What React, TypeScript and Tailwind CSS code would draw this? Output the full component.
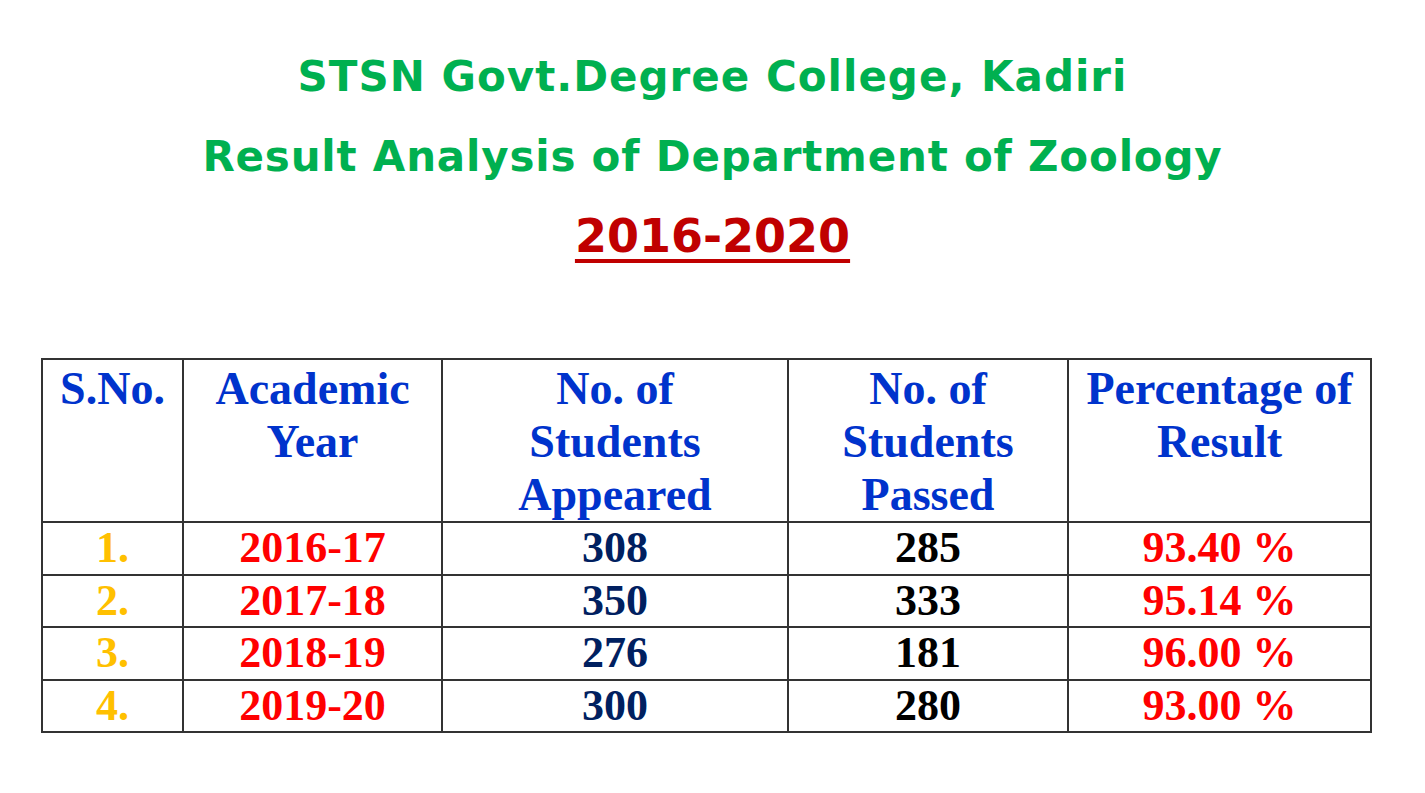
import React from 'react';

const rows = [
  { sno: '1.', year: '2016-17', appeared: '308', passed: '285', pct: '93.40 %' },
  { sno: '2.', year: '2017-18', appeared: '350', passed: '333', pct: '95.14 %' },
  { sno: '3.', year: '2018-19', appeared: '276', passed: '181', pct: '96.00 %' },
  { sno: '4.', year: '2019-20', appeared: '300', passed: '280', pct: '93.00 %' },
];

const App: React.FC = () => {
  return (
    <div className="w-[1425px] h-[793px] bg-white overflow-hidden">
      {/* Title block */}
      <div className="flex flex-col items-center pt-[37px] font-['DejaVu_Sans',sans-serif] font-bold">
        <h1 className="text-[#00b050] text-[42px] leading-[80px] tracking-[1px]">
          STSN Govt.Degree College, Kadiri
        </h1>
        <h2 className="text-[#00b050] text-[42px] leading-[80px] tracking-[0.8px]">
          Result Analysis of Department of Zoology
        </h2>
        <p className="text-[#c00000] text-[46px] leading-[78px] underline decoration-[4px] underline-offset-[7px]">
          2016-2020
        </p>
      </div>

      {/* Table */}
      <div className="pl-[41px] pt-[83px]">
        <table className="border-collapse font-['Liberation_Serif',serif] font-bold">
          <thead>
            <tr className="text-[#0033cc] text-[46px] leading-[53px] align-top">
              <th className="w-[141px] h-[162px] border-2 border-[#333] pt-[2px] font-bold">S.No.</th>
              <th className="w-[259px] border-2 border-[#333] pt-[2px] font-bold">
                Academic<br />Year
              </th>
              <th className="w-[346px] border-2 border-[#333] pt-[2px] font-bold">
                No. of<br />Students<br />Appeared
              </th>
              <th className="w-[280px] border-2 border-[#333] pt-[2px] font-bold">
                No. of<br />Students<br />Passed
              </th>
              <th className="w-[303px] border-2 border-[#333] pt-[2px] font-bold">
                Percentage of<br />Result
              </th>
            </tr>
          </thead>
          <tbody>
            {rows.map((r) => (
              <tr key={r.sno} className="h-[52.5px] text-[44px] leading-[50px] text-center">
                <td className="border-2 border-[#333] text-[#ffc000]">{r.sno}</td>
                <td className="border-2 border-[#333] text-[#ff0000]">{r.year}</td>
                <td className="border-2 border-[#333] text-[#002060]">{r.appeared}</td>
                <td className="border-2 border-[#333] text-black">{r.passed}</td>
                <td className="border-2 border-[#333] text-[#ff0000]">{r.pct}</td>
              </tr>
            ))}
          </tbody>
        </table>
      </div>
    </div>
  );
};

export default App;
